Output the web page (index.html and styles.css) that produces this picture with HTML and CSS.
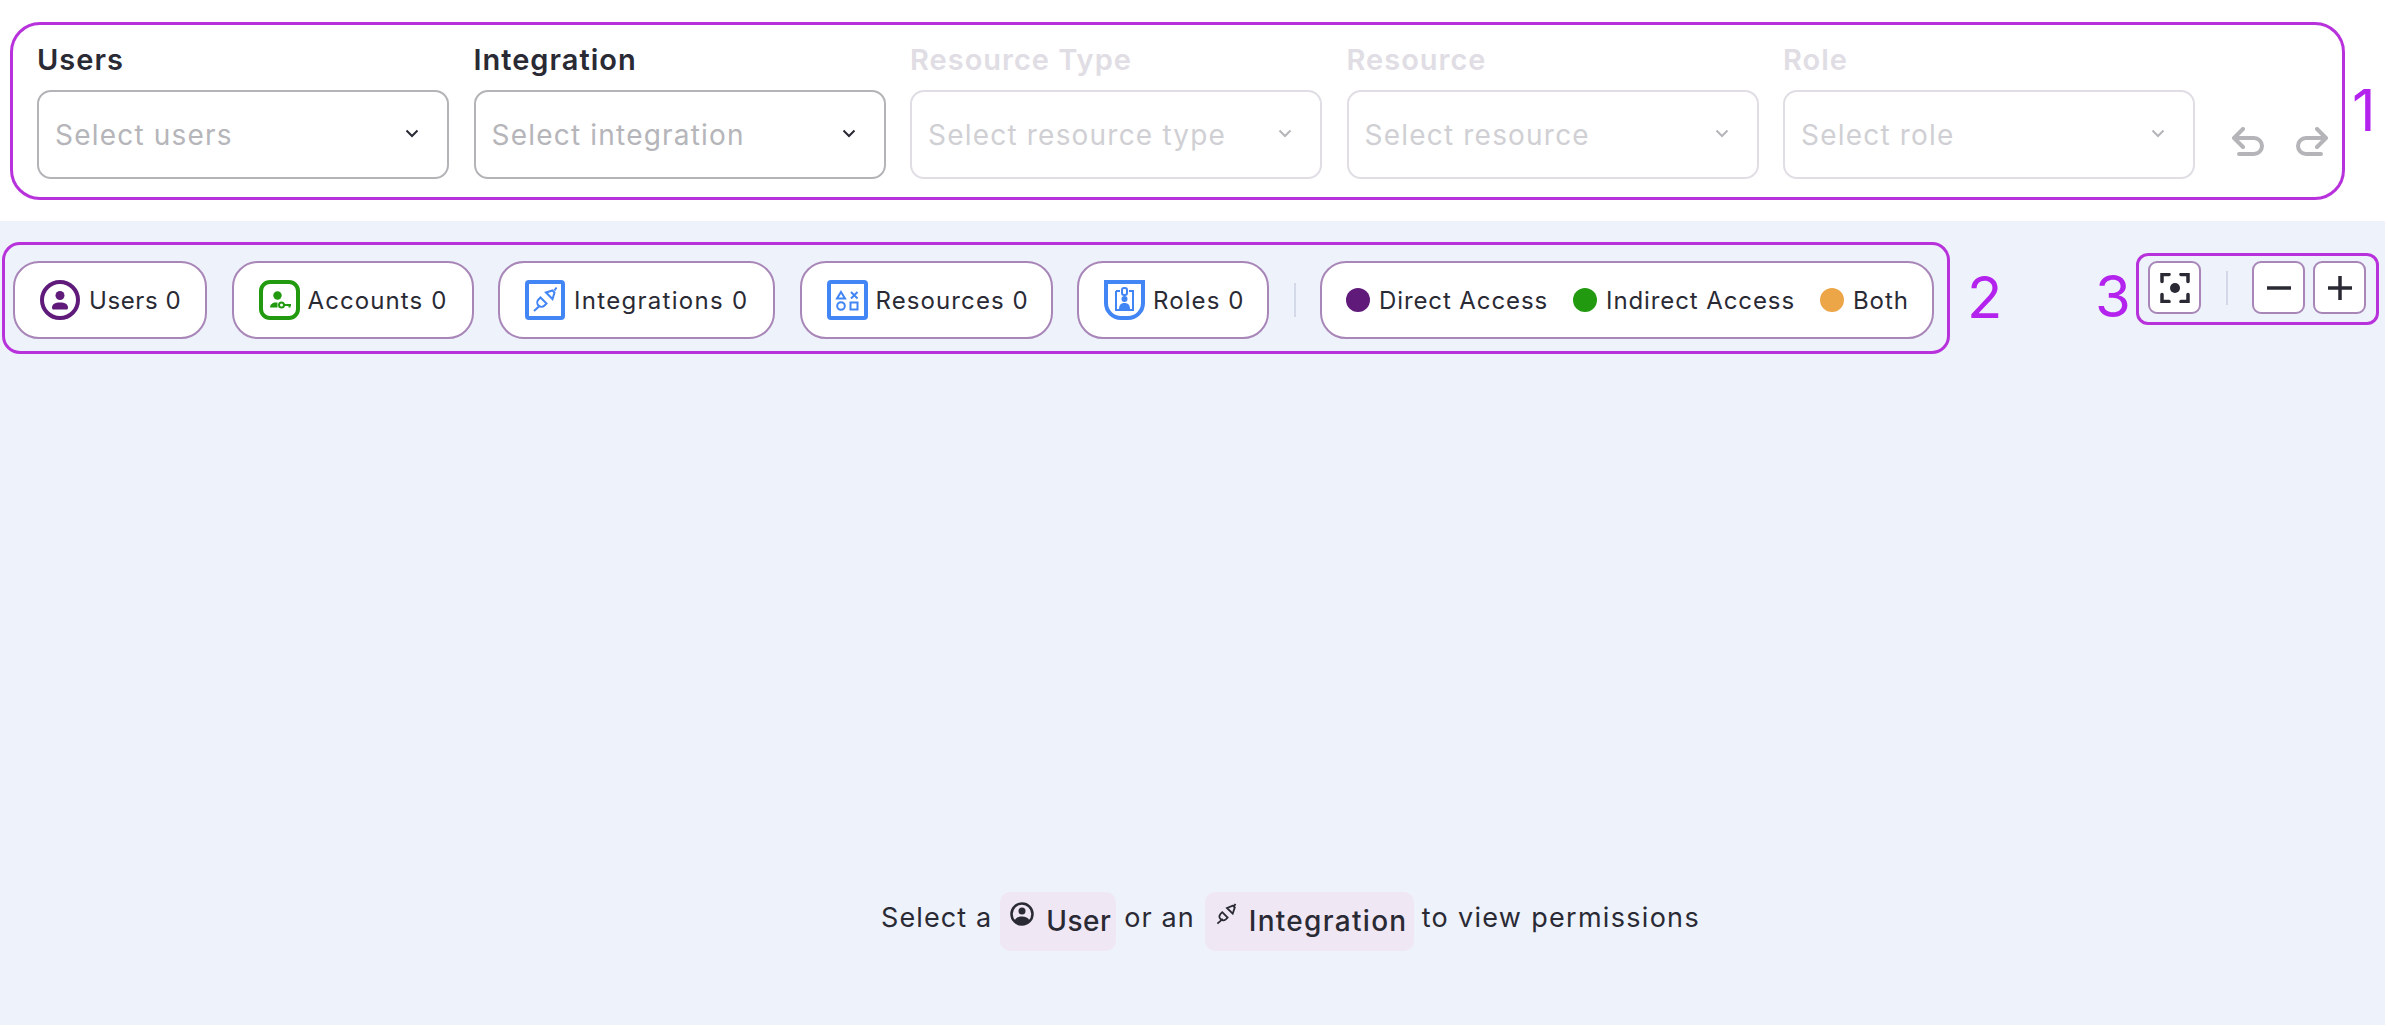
FILE: index.html
```html
<!DOCTYPE html>
<html lang="en">
<head>
    <meta charset="UTF-8">
    <title>Access Graph</title>
    <link rel="stylesheet" href="styles.css">
</head>
<body>
    <header class="top">
        <section class="filters outline">
            <div class="field">
                <label>Users</label>
                <div class="select"><span>Select users</span>
                    <svg class="chev" viewBox="0 0 14 9"><path d="M1.5 1.5 7 7l5.5-5.5"/></svg></div>
            </div>
            <div class="field">
                <label>Integration</label>
                <div class="select"><span>Select integration</span>
                    <svg class="chev" viewBox="0 0 14 9"><path d="M1.5 1.5 7 7l5.5-5.5"/></svg></div>
            </div>
            <div class="field off">
                <label>Resource Type</label>
                <div class="select"><span>Select resource type</span>
                    <svg class="chev" viewBox="0 0 14 9"><path d="M1.5 1.5 7 7l5.5-5.5"/></svg></div>
            </div>
            <div class="field off">
                <label>Resource</label>
                <div class="select"><span>Select resource</span>
                    <svg class="chev" viewBox="0 0 14 9"><path d="M1.5 1.5 7 7l5.5-5.5"/></svg></div>
            </div>
            <div class="field off">
                <label>Role</label>
                <div class="select"><span>Select role</span>
                    <svg class="chev" viewBox="0 0 14 9"><path d="M1.5 1.5 7 7l5.5-5.5"/></svg></div>
            </div>
            <div class="history">
                <svg viewBox="0 0 32 30"><path d="M11 2 2 11l9 9M3 11h19a8 8 0 0 1 0 16H7"/></svg>
                <svg viewBox="0 0 32 30"><path d="m21 2 9 9-9 9M29 11H10a8 8 0 0 0 0 16h15"/></svg>
            </div>
        </section>
        <span class="callout callout-one">1</span>
    </header>

    <main class="canvas">
        <div class="toolbar">
            <section class="summary outline">
                <div class="pill pill-users">
                    <svg class="icon" viewBox="0 0 40 40">
                        <circle class="ring-purple" cx="20" cy="20" r="18"/>
                        <circle class="fill-purple" cx="20" cy="15.500" r="4.500"/>
                        <path class="fill-purple" d="M12 28c0-4 3-5.500 8-5.500s8 1.500 8 5.500c0 .8-.7 1.500-1.500 1.500h-13c-.8 0-1.500-.7-1.500-1.500z"/>
                    </svg>
                    <span>Users 0</span>
                </div>
                <div class="pill pill-accounts">
                    <svg class="icon" viewBox="0 0 41 40">
                        <rect class="ring-green" x="2" y="2" width="37" height="36" rx="9"/>
                        <circle class="fill-green" cx="18.500" cy="15.500" r="4.200"/>
                        <path class="fill-green" d="M11 27.500c0-3 2.500-5 6-5h1.500v5z"/>
                        <circle class="key" cx="22.500" cy="25" r="2.500"/>
                        <path class="key" d="M25 25h7M30.500 25v2.500"/>
                    </svg>
                    <span>Accounts 0</span>
                </div>
                <div class="pill pill-integrations">
                    <svg class="icon" viewBox="0 0 40 40">
                        <rect class="ring-blue" x="2" y="2" width="36" height="36" rx="2"/>
                        <g class="plug">
                            <path d="M9 31l5.500-5M29.500 10.500l2-3"/>
                            <path d="M15.500 17.500l6 6-2 2a4.200 4.200 0 0 1-6-6z"/>
                            <path d="M21 12.500l6.500 6.500 2-6.500-2-2z"/>
                        </g>
                    </svg>
                    <span>Integrations 0</span>
                </div>
                <div class="pill pill-resources">
                    <svg class="icon" viewBox="0 0 41 40">
                        <rect class="ring-blue" x="2" y="2" width="37" height="36" rx="2"/>
                        <g class="shapes">
                            <path d="M14 12l4 6.500h-8z"/>
                            <path d="M24 12l6.500 6.500M30.500 12 24 18.500"/>
                            <circle cx="14" cy="26" r="3.800"/>
                            <rect x="23.500" y="22.500" width="7" height="7"/>
                        </g>
                    </svg>
                    <span>Resources 0</span>
                </div>
                <div class="pill pill-roles">
                    <svg class="icon" viewBox="0 0 41 40">
                        <path class="ring-blue" d="M2 2h37v21a15 15 0 0 1-15 15h-7A15 15 0 0 1 2 23z"/>
                        <g class="shapes">
                            <path d="M12 11h4M25 11h4v19H12V11"/>
                            <rect x="18" y="8" width="5" height="7" rx="2"/>
                            <path class="badge" d="M15 29c0-4 2-6 5.500-6s5.500 2 5.500 6z"/>
                            <circle class="badge" cx="20.500" cy="19" r="3"/>
                        </g>
                    </svg>
                    <span>Roles 0</span>
                </div>
                <div class="divider"></div>
                <div class="pill pill-legend">
                    <span class="legend-item"><i class="dot dot-direct"></i>Direct Access</span>
                    <span class="legend-item"><i class="dot dot-indirect"></i>Indirect Access</span>
                    <span class="legend-item"><i class="dot dot-both"></i>Both</span>
                </div>
            </section>
            <span class="callout callout-two">2</span>
            <span class="callout callout-three">3</span>
            <section class="zoom outline">
                <button class="zoom-btn">
                    <svg viewBox="0 0 30 30">
                        <path d="M9 1.500H2v7M21 1.500h7v7M9 28.500H2v-7M21 28.500h7v-7"/>
                        <circle cx="15" cy="15" r="5"/>
                    </svg>
                </button>
                <div class="divider zoom-divider"></div>
                <button class="zoom-btn"><svg viewBox="0 0 24 24"><path d="M0 12h24"/></svg></button>
                <button class="zoom-btn"><svg viewBox="0 0 24 24"><path d="M0 12h24M12 0v24"/></svg></button>
            </section>
        </div>

        <p class="empty">
            <span>Select a</span>
            <span class="chip chip-user">
                <svg class="chip-icon" viewBox="0 0 24 24">
                    <circle class="chip-ring" cx="12" cy="12" r="10.500"/>
                    <circle cx="12" cy="9" r="3.500"/>
                    <path d="M4.500 18.500c1.500-3 4-4 7.500-4s6 1 7.500 4c-2 2.500-4.500 4-7.500 4s-5.500-1.500-7.500-4z"/>
                </svg>
                <span>User</span>
            </span>
            <span class="or-an">or an</span>
            <span class="chip chip-integration">
                <svg class="chip-icon chip-plug" viewBox="0 0 40 40">
                    <path d="M4 36l9-8M31 9l3-6"/>
                    <path d="M12 17l9 9-3 3a6.400 6.400 0 0 1-9-9z"/>
                    <path d="M20 10l9.500 9.500L33 9l-3-3z"/>
                </svg>
                <span>Integration</span>
            </span>
            <span class="tail">to view permissions</span>
        </p>
    </main>
</body>
</html>
```

FILE: styles.css
```css
* {
    margin: 0;
    padding: 0;
    box-sizing: border-box;
}

body {
    background: #fff;
    color: #2a2a35;
    font-family: Inter, "Noto Sans", sans-serif;
    height: 1031px;
    overflow: hidden;
}

.outline {
    border: 3px solid #b832dc;
}

.callout {
    color: #b422ee;
    font-size: 58px;
    line-height: 1;
    font-weight: 400;
}

/* Filters */
.top {
    height: 221px;
    padding: 22px 0 0 10px;
    display: flex;
}

.filters {
    width: 2335px;
    height: 178px;
    flex: none;
    border-radius: 30px;
    padding: 17px 0 0 24px;
    display: flex;
    gap: 24.500px;
}

.callout-one {
    margin: 59px 0 0 7px;
}

.field {
    width: 412px;
    flex: none;
}

.field label {
    display: block;
    font-size: 29px;
    font-weight: 600;
    letter-spacing: 1px;
    line-height: 36px;
    margin-bottom: 12px;
}

.select {
    height: 89px;
    border: 2px solid #b4b4b8;
    border-radius: 14px;
    padding: 0 28px 0 16px;
    display: flex;
    align-items: center;
    justify-content: space-between;
    font-size: 28px;
    letter-spacing: 1.200px;
    color: #b5b5ba;
}

.chev {
    width: 14px;
    height: 9px;
    margin-bottom: 2px;
    fill: none;
    stroke: #2a2a35;
    stroke-width: 2;
}

.field.off label {
    color: #e0dde4;
}

.field.off .select {
    border-color: #e0dde4;
    color: #d0d0d4;
}

.field.off .chev {
    stroke: #b5b5ba;
}

.history {
    display: flex;
    gap: 32px;
    margin: 85px 0 0 12.500px;
}

.history svg {
    width: 32px;
    height: 30px;
    fill: none;
    stroke: #b5b5b9;
    stroke-width: 4;
    stroke-linecap: round;
    stroke-linejoin: round;
}

/* Canvas */
.canvas {
    width: 2385px;
    height: 804px;
    background: #eef2fb;
    padding: 21px 0 0 2px;
}

.toolbar {
    display: flex;
    align-items: flex-start;
}

.summary {
    width: 1948px;
    height: 112px;
    flex: none;
    border-radius: 18px;
    padding: 16px 0 0 8px;
    display: flex;
    gap: 24.500px;
}

.pill {
    height: 78px;
    flex: none;
    background: #fff;
    border: 2px solid #a886b8;
    border-radius: 26px;
    padding: 0 0 0 25px;
    display: flex;
    align-items: center;
    gap: 9px;
    font-size: 24px;
    letter-spacing: 1.100px;
    white-space: nowrap;
}

.pill-users {
    width: 194px;
    letter-spacing: 0.600px;
}

.pill-accounts {
    width: 242px;
    gap: 8px;
}

.pill-integrations {
    width: 277px;
    letter-spacing: 1.300px;
}

.pill-resources {
    width: 253px;
    gap: 8px;
}

.pill-roles {
    width: 192px;
    gap: 8px;
}

.icon {
    width: 40px;
    height: 40px;
    flex: none;
    fill: none;
}

.pill-accounts .icon,
.pill-resources .icon,
.pill-roles .icon {
    width: 41px;
}

.ring-purple {
    stroke: #5f1a7a;
    stroke-width: 4;
}

.fill-purple {
    fill: #5f1a7a;
}

.ring-green {
    stroke: #229a10;
    stroke-width: 4;
}

.fill-green {
    fill: #229a10;
}

.key {
    stroke: #229a10;
    stroke-width: 2;
    fill: #fff;
}

.ring-blue {
    stroke: #4285f4;
    stroke-width: 4;
}

.plug,
.shapes {
    stroke: #4285f4;
    stroke-width: 2;
    fill: none;
}

.shapes .badge {
    fill: #4285f4;
    stroke: none;
}

.divider {
    width: 2px;
    height: 34px;
    flex: none;
    background: #d3d9e6;
    margin: 22px 0 0;
}

.pill-legend {
    width: 614px;
    gap: 25px;
    padding: 0 0 0 24px;
    letter-spacing: 0.900px;
}

.legend-item {
    display: flex;
    align-items: center;
    gap: 9px;
}

.dot {
    width: 24px;
    height: 24px;
    border-radius: 50%;
}

.dot-direct {
    background: #5f1a7a;
}

.dot-indirect {
    background: #229a10;
}

.dot-both {
    background: #eca648;
}

.callout-two {
    margin: 26px 0 0 17px;
}

.callout-three {
    margin: 25px 0 0 92.500px;
}

.zoom {
    width: 243px;
    height: 72px;
    flex: none;
    margin: 11px 0 0 5.500px;
    border-radius: 12px;
    padding: 5px 9px;
    display: flex;
    gap: 8px;
}

.zoom-btn {
    width: 53px;
    height: 53px;
    flex: none;
    background: #fff;
    border: 2px solid #a886b8;
    border-radius: 9px;
    display: flex;
    align-items: center;
    justify-content: center;
}

.zoom-btn svg {
    width: 24px;
    height: 24px;
    fill: none;
    stroke: #2a2a35;
    stroke-width: 3.500;
    stroke-linecap: round;
}

.zoom-btn:first-child svg {
    width: 30px;
    height: 30px;
}

.zoom-btn circle {
    fill: #2a2a35;
    stroke: none;
}

.zoom-divider {
    height: 34px;
    margin: 10px 16px 0 17px;
}

/* Empty state */
.empty {
    margin-top: 538px;
    padding-left: 879px;
    display: flex;
    align-items: flex-start;
    gap: 8px;
    font-size: 27px;
    letter-spacing: 1.100px;
    line-height: 52px;
    white-space: nowrap;
}

.or-an {
    margin-right: 2px;
}

.tail {
    letter-spacing: 1.300px;
}

.chip {
    height: 59px;
    flex: none;
    background: #f0e7f4;
    border-radius: 10px;
    display: flex;
    line-height: 59px;
    font-size: 28px;
    font-weight: 500;
}

.chip-user {
    width: 116px;
    padding-left: 10px;
    gap: 12px;
    letter-spacing: 0.500px;
}

.chip-integration {
    width: 209px;
    padding-left: 10px;
    gap: 10px;
    letter-spacing: 1.300px;
}

.chip-icon {
    width: 24px;
    height: 24px;
    flex: none;
    margin-top: 10px;
    fill: #2a2a35;
}

.chip-ring {
    fill: none;
    stroke: #2a2a35;
    stroke-width: 2.500;
}

.chip-plug {
    fill: none;
    stroke: #2a2a35;
    stroke-width: 3;
}
```
